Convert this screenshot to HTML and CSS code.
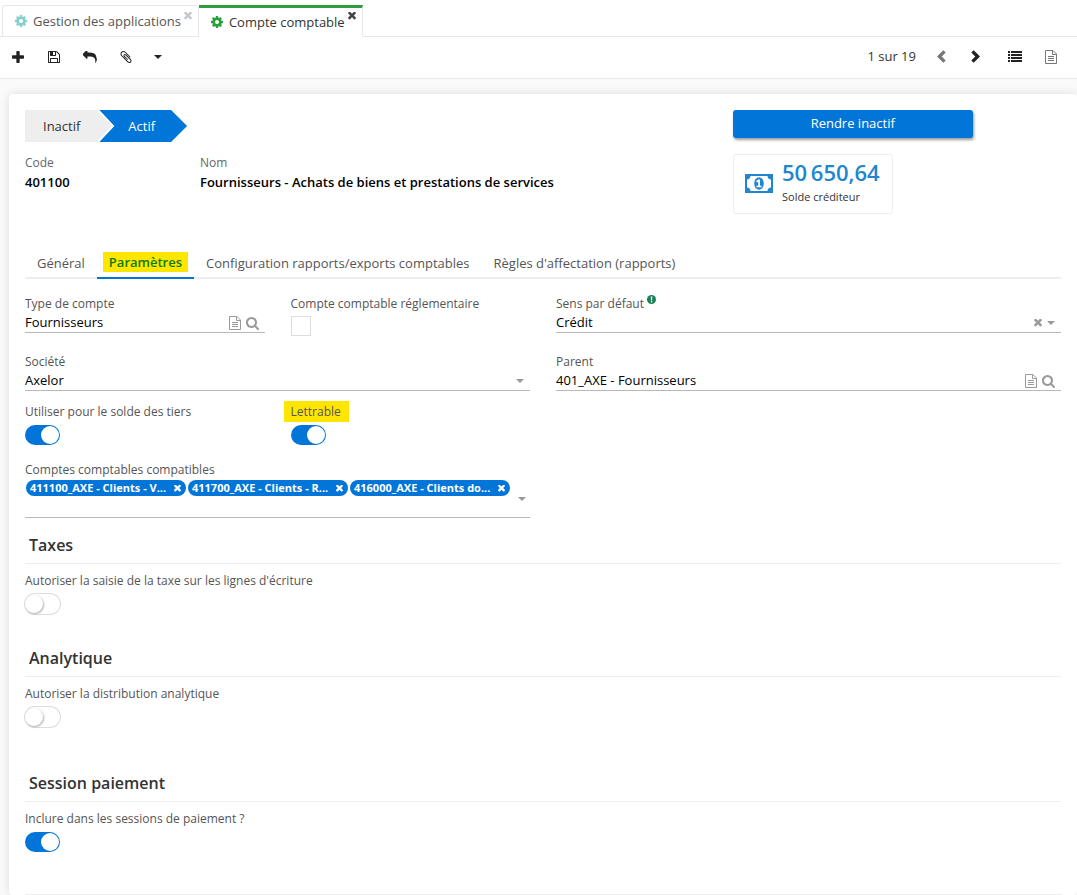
FILE: index.html
```html
<!DOCTYPE html>
<html lang="fr">
<head>
<meta charset="utf-8">
<title>Compte comptable</title>
<link rel="stylesheet" href="styles.css">
</head>
<body>
<svg class="sprite" aria-hidden="true">
  <symbol id="cog" viewBox="128 128 1536 1536"><path d="M1152 896q0-106-75-181t-181-75-181 75-75 181 75 181 181 75 181-75 75-181zm512-109v222q0 12-8 23t-20 13l-185 28q-19 54-39 91 35 50 107 138 10 12 10 25t-9 23q-27 37-99 108t-94 71q-12 0-26-9l-138-108q-44 23-91 38-16 136-29 186-7 28-36 28h-222q-14 0-24.500-8.500t-11.500-21.500l-28-184q-49-16-90-37l-141 107q-10 9-25 9-14 0-25-11-126-114-165-168-7-10-7-23 0-12 8-23 15-21 51-66.500t54-70.500q-27-50-41-99l-183-27q-13-2-21-12.500t-8-23.500v-222q0-12 8-23t19-13l186-28q14-46 39-92-40-57-107-138-10-12-10-24 0-10 9-23 26-36 98.500-107.500t94.500-71.500q13 0 26 10l138 107q44-23 91-38 16-136 29-186 7-28 36-28h222q14 0 24.500 8.500t11.500 21.500l28 184q49 16 90 37l142-107q9-9 24-9 13 0 25 10 129 119 165 170 7 8 7 22 0 12-8 23-15 21-51 66.500t-54 70.500q26 50 41 98l183 28q13 2 21 12.500t8 23.500z"/></symbol>
  <symbol id="times" viewBox="302 366 1188 1188"><path transform="translate(0 -68)" d="M1490 1322q0 40-28 68l-136 136q-28 28-68 28t-68-28l-294-294-294 294q-28 28-68 28t-68-28l-136-136q-28-28-28-68t28-68l294-294-294-294q-28-28-28-68t28-68l136-136q28-28 68-28t68 28l294 294 294-294q28-28 68-28t68 28l136 136q28 28 28 68t-28 68l-294 294 294 294q28 28 28 68z"/></symbol>
  <symbol id="plus" viewBox="192 128 1408 1408"><path d="M1600 736v192q0 40-28 68t-68 28h-416v416q0 40-28 68t-68 28h-192q-40 0-68-28t-28-68v-416h-416q-40 0-68-28t-28-68v-192q0-40 28-68t68-28h416v-416q0-40 28-68t68-28h192q40 0 68 28t28 68v416h416q40 0 68 28t28 68z"/></symbol>
  <symbol id="save" viewBox="128 128 1536 1536"><path d="M512 1536h768v-384h-768v384zm896 0h128v-896q0-14-10-38.500t-20-34.500l-281-281q-10-10-34-20t-39-10v416q0 40-28 68t-68 28h-576q-40 0-68-28t-28-68v-416h-128v1280h128v-416q0-40 28-68t68-28h832q40 0 68 28t28 68v416zm-384-928v-320q0-13-9.500-22.500t-22.500-9.500h-192q-13 0-22.500 9.500t-9.500 22.500v320q0 13 9.500 22.500t22.500 9.500h192q13 0 22.500-9.500t9.500-22.500zm640 32v928q0 40-28 68t-68 28h-1344q-40 0-68-28t-28-68v-1344q0-40 28-68t68-28h928q40 0 88 20t76 48l280 280q28 28 48 76t20 88z"/></symbol>
  <symbol id="reply" viewBox="0 128 1792 1536"><path d="M1792 1120q0 166-127 451-3 7-10.500 24t-13.500 30-13 22q-12 17-28 17-15 0-23.500-10t-8.500-25q0-9 2.500-26.500t2.500-23.500q5-68 5-123 0-112-19.500-200.500t-54-153.500-89.500-112-115.500-78-146.500-49-167.500-24-193.500-7h-224v256q0 26-19 45t-45 19-45-19l-512-512q-19-19-19-45t19-45l512-512q19-19 45-19t45 19 19 45v256h224q713 0 875 403 53 134 53 333z"/></symbol>
  <symbol id="clip" viewBox="196 132 1400 1528"><path d="M1596 1385q0 117-79 196t-196 79q-135 0-235-100l-777-776q-113-115-113-271 0-159 110-270t269-111q158 0 273 113l605 606q10 10 10 22 0 16-30.500 46.500t-46.500 30.500q-13 0-23-10l-606-607q-79-77-181-77-106 0-179 75t-73 181q0 105 76 181l776 777q63 63 145 63 64 0 106-42t42-106q0-82-63-145l-581-581q-26-24-60-24-29 0-48 19t-19 48q0 32 25 59l410 410q10 10 10 22 0 16-31 47t-47 31q-12 0-22-10l-410-410q-63-61-63-149 0-82 57-139t139-57q88 0 149 63l581 581q100 98 100 235z"/></symbol>
  <symbol id="caret" viewBox="0 0 8 4"><path d="M0 0h8L4 4z"/></symbol>
  <symbol id="prev" viewBox="0 0 9 13"><path d="M6.300.3 8.700 2.600 4.700 6.500l4 3.900-2.400 2.300L0 6.500z"/></symbol>
  <symbol id="next" viewBox="0 0 9 13"><path d="M2.700.3.3 2.600l4 3.900-4 3.900 2.400 2.300L9 6.500z"/></symbol>
  <symbol id="list" viewBox="0 0 14 11"><path d="M0 0h2v2H0zM3 0h11v2H3zM0 3h2v2H0zM3 3h11v2H3zM0 6h2v2H0zM3 6h11v2H3zM0 9h2v2H0zM3 9h11v2H3z"/></symbol>
  <symbol id="file" viewBox="0 0 12 14"><path fill="none" stroke="currentColor" d="M.5.5h7.500l3.500 3.500v9.500H.5zM7.500.5v4h4M3 6.500h6M3 8.500h6M3 10.500h6"/></symbol>
  <symbol id="search" viewBox="64 128 1664 1664"><path d="M1216 832q0-185-131.500-316.500t-316.500-131.500-316.500 131.500-131.500 316.500 131.500 316.500 316.500 131.500 316.500-131.500 131.500-316.500zm512 832q0 52-38 90t-90 38q-54 0-90-38l-343-342q-179 124-399 124-143 0-273.500-55.500t-225-150-150-225-55.500-273.500 55.500-273.500 150-225 225-150 273.500-55.500 273.500 55.500 225 150 150 225 55.500 273.500q0 220-124 399l343 343q37 37 37 90z"/></symbol>
  <symbol id="money" viewBox="0 0 28 19"><path fill-rule="evenodd" d="M0 0h28v19H0zM5.500 2A4 4 0 0 1 2 5.500v8A4 4 0 0 1 5.500 17h17a4 4 0 0 1 3.500-3.500v-8A4 4 0 0 1 22.500 2z"/><ellipse cx="14" cy="9.500" rx="4.800" ry="6.200"/><path fill="#fff" d="M13.200 5.500h1.800v6.300h1.500v1.500h-5v-1.500h1.700V7.600l-1.300.8-.8-1.200z"/></symbol>
  <symbol id="info" viewBox="0 0 9 9"><circle cx="4.500" cy="4.500" r="4.500"/><path fill="#fff" d="M3.800 1.500h1.500L5.100 5.400H4zM3.900 6.100h1.300v1.300H3.900z"/></symbol>
</svg>

<nav class="apptabs" aria-label="Onglets ouverts">
  <div class="apptab">
    <svg class="i12"><use href="#cog"/></svg>
    <a href="#applications">Gestion des applications</a>
    <button class="close" aria-label="Fermer Gestion des applications"><svg class="i8"><use href="#times"/></svg></button>
  </div>
  <div class="apptab current">
    <svg class="i12"><use href="#cog"/></svg>
    <a href="#compte" aria-current="page">Compte comptable</a>
    <button class="close" aria-label="Fermer Compte comptable"><svg class="i8"><use href="#times"/></svg></button>
  </div>
</nav>

<header class="toolbar">
  <button class="tool" aria-label="Nouveau"><svg class="i12"><use href="#plus"/></svg></button>
  <button class="tool" aria-label="Enregistrer"><svg class="i12"><use href="#save"/></svg></button>
  <button class="tool" aria-label="Annuler"><svg class="wide"><use href="#reply"/></svg></button>
  <button class="tool" aria-label="Pièces jointes"><svg class="i12"><use href="#clip"/></svg></button>
  <button class="tool narrow" aria-label="Plus d'actions"><svg class="caret"><use href="#caret"/></svg></button>
  <span class="pager">1 sur 19</span>
  <button class="tool step-nav muted" aria-label="Précédent"><svg class="chev"><use href="#prev"/></svg></button>
  <button class="tool step-nav" aria-label="Suivant"><svg class="chev"><use href="#next"/></svg></button>
  <button class="tool apart" aria-label="Vue liste"><svg class="list"><use href="#list"/></svg></button>
  <button class="tool muted" aria-label="Vue formulaire"><svg class="file"><use href="#file"/></svg></button>
</header>

<main class="page">
  <form class="card">
    <div class="head">
      <div class="identity">
        <div class="steps">
          <button type="button" class="step">Inactif</button>
          <button type="button" class="step active">Actif</button>
        </div>
        <dl class="facts">
          <div><dt>Code</dt><dd>401100</dd></div>
          <div><dt>Nom</dt><dd>Fournisseurs - Achats de biens et prestations de services</dd></div>
        </dl>
      </div>
      <div class="side">
        <button type="button" class="primary">Rendre inactif</button>
        <div class="stat">
          <svg class="money"><use href="#money"/></svg>
          <div>
            <div class="amount">50&#8201;650,64</div>
            <div class="caption">Solde créditeur</div>
          </div>
        </div>
      </div>
    </div>

    <nav class="tabs" aria-label="Sections">
      <a href="#general">Général</a>
      <a href="#parametres" class="selected" aria-current="true"><mark>Paramètres</mark></a>
      <a href="#configuration">Configuration rapports/exports comptables</a>
      <a href="#regles">Règles d'affectation (rapports)</a>
    </nav>

    <div class="row">
      <div class="field">
        <label for="type">Type de compte</label>
        <div class="control"><input id="type" type="text" value="Fournisseurs"><button type="button" aria-label="Ouvrir le type"><svg class="file"><use href="#file"/></svg></button><button type="button" aria-label="Rechercher un type"><svg class="i13"><use href="#search"/></svg></button></div>
      </div>
      <div class="field">
        <label for="regl">Compte comptable réglementaire</label>
        <input id="regl" class="check" type="checkbox">
      </div>
      <div class="field span2">
        <label for="sens">Sens par défaut <svg class="info"><use href="#info"/></svg></label>
        <div class="control"><select id="sens"><option>Crédit</option></select><button type="button" aria-label="Effacer le sens"><svg class="i8"><use href="#times"/></svg></button><svg class="caret"><use href="#caret"/></svg></div>
      </div>
    </div>

    <div class="row">
      <div class="field span2">
        <label for="societe">Société</label>
        <div class="control"><select id="societe"><option>Axelor</option></select><svg class="caret"><use href="#caret"/></svg></div>
      </div>
      <div class="field span2">
        <label for="parent">Parent</label>
        <div class="control"><input id="parent" type="text" value="401_AXE - Fournisseurs"><button type="button" aria-label="Ouvrir le parent"><svg class="file"><use href="#file"/></svg></button><button type="button" aria-label="Rechercher un parent"><svg class="i13"><use href="#search"/></svg></button></div>
      </div>
    </div>

    <div class="row switches">
      <div class="field">
        <label for="solde">Utiliser pour le solde des tiers</label>
        <input id="solde" class="switch" type="checkbox" checked>
      </div>
      <div class="field">
        <label for="lettrable"><mark>Lettrable</mark></label>
        <input id="lettrable" class="switch" type="checkbox" checked>
      </div>
    </div>

    <div class="row chiprow">
      <div class="field span2">
        <label for="compat">Comptes comptables compatibles</label>
        <div class="chips">
          <span class="chip">411100_AXE - Clients - V... <button type="button" aria-label="Retirer 411100"><svg class="i7"><use href="#times"/></svg></button></span>
          <span class="chip">411700_AXE - Clients - R... <button type="button" aria-label="Retirer 411700"><svg class="i7"><use href="#times"/></svg></button></span>
          <span class="chip">416000_AXE - Clients do... <button type="button" aria-label="Retirer 416000"><svg class="i7"><use href="#times"/></svg></button></span>
          <input id="compat" type="text">
          <svg class="caret"><use href="#caret"/></svg>
        </div>
      </div>
    </div>

    <section class="group">
      <h2>Taxes</h2>
      <label for="taxe">Autoriser la saisie de la taxe sur les lignes d'écriture</label>
      <input id="taxe" class="switch" type="checkbox">
    </section>
    <section class="group roomy">
      <h2>Analytique</h2>
      <label for="analytique">Autoriser la distribution analytique</label>
      <input id="analytique" class="switch" type="checkbox">
    </section>
    <section class="group last">
      <h2>Session paiement</h2>
      <label for="session">Inclure dans les sessions de paiement ?</label>
      <input id="session" class="switch" type="checkbox" checked>
    </section>
  </form>
</main>
</body>
</html>
```
FILE: styles.css
```css
* { box-sizing: border-box; }
body {
  margin: 0;
  font-family: "Open Sans", sans-serif;
  font-size: 13px;
  line-height: 20px;
  color: #333;
  background: #fafafa;
}
button, input, select { font: inherit; color: inherit; margin: 0; padding: 0; border: 0; background: none; }
button { display: inline-flex; align-items: center; justify-content: center; cursor: pointer; }
a { color: inherit; text-decoration: none; }
svg { display: block; flex: none; fill: currentColor; }
.sprite { position: absolute; width: 0; height: 0; }
.i13 { width: 13px; height: 13px; }
.i12 { width: 12px; height: 12px; }
.i8 { width: 8px; height: 8px; }
.i7 { width: 7px; height: 7px; }
.wide { width: 14px; height: 12px; }
.caret { width: 8px; height: 4px; }
.chev { width: 9px; height: 13px; }
.list { width: 14px; height: 11px; }
.file { width: 12px; height: 14px; }

/* open views */
.apptabs {
  display: flex;
  align-items: flex-end;
  height: 37px;
  padding-left: 2px;
  background: #fff;
  box-shadow: inset 0 -1px #e7e7e7;
}
.apptab {
  display: flex;
  align-items: center;
  height: 32px;
  padding: 0 6px 0 12px;
  border: 1px solid #e7e7e7;
  border-radius: 3px 3px 0 0;
  color: #555;
}
.apptab a { margin: 0 3px 0 6px; }
.apptab .i12 { color: #84d0cc; }
.apptab .close { align-self: flex-start; margin-top: 6px; color: #c8c8c8; }
.apptab.current { border-top: 3px solid #2e9e41; border-bottom-color: #fff; border-left: 0; border-radius: 0; color: #333; background: #fff; }
.apptab.current .i12 { color: #28a03c; }
.apptab.current .close { margin-top: 4px; color: #444; }

.toolbar {
  display: flex;
  align-items: center;
  height: 42px;
  padding: 0 8px 2px 0;
  background: #fff;
  border-bottom: 1px solid #e7e7e7;
}
.tool { width: 36px; height: 32px; color: #222; }
.tool.narrow { width: 28px; }
.tool.step-nav { width: 34px; }
.tool.muted { color: #777; }
.tool.apart { margin-left: 5px; }
.pager { margin-left: auto; padding: 0 8px 2px 0; }

/* form card */
.page { padding: 15px 0 0 9px; }
.card {
  padding: 16px 16px 0;
  background: #fff;
  border-radius: 4px;
  box-shadow: 0 0 10px rgba(0, 0, 0, .12);
}
.head { display: grid; grid-template-columns: repeat(12, minmax(0, 1fr)); column-gap: 26px; }
.identity { grid-column: span 8; }
.side { grid-column: span 3; }
.steps { display: flex; }
.step {
  height: 32px;
  padding: 0 32px 0 18px;
  background: #eee;
  clip-path: polygon(0 0, calc(100% - 16px) 0, 100% 50%, calc(100% - 16px) 100%, 0 100%);
}
.step.active {
  margin-left: -13px;
  padding-left: 29px;
  color: #fff;
  background: #0275d8;
  clip-path: polygon(0 0, calc(100% - 16px) 0, 100% 50%, calc(100% - 16px) 100%, 0 100%, 15px 50%);
}
.facts { display: grid; grid-template-columns: 149px 1fr; column-gap: 26px; margin: 11px 0 0; }
.facts dt { font-size: 12px; color: #666; }
.facts dd { margin: 0; line-height: 18px; font-weight: 600; color: #000; }
.primary {
  width: 100%;
  height: 28px;
  padding-bottom: 2px;
  border-radius: 3px;
  color: #fff;
  background: #0275d8;
  box-shadow: 1px 2px 3px rgba(0, 0, 0, .4);
}
.stat {
  display: inline-flex;
  align-items: center;
  gap: 9px;
  height: 60px;
  margin-top: 16px;
  padding: 0 12px 2px 11px;
  border: 1px solid #eee;
  border-radius: 3px;
}
.money { width: 28px; height: 19px; color: #2185d0; }
.amount { font-size: 22px; line-height: 28px; font-weight: 600; color: #2185d0; }
.caption { font-size: 11px; line-height: 22px; }

.tabs { display: flex; height: 32px; margin: 33px 0 15px; border-bottom: 2px solid #eee; line-height: 32px; color: #555; }
.tabs a { padding: 0 12px; height: 32px; }
.tabs .selected { padding: 0 6px; border-bottom: 2px solid #0275d8; color: #0b7a0b; font-weight: 600; line-height: 30px; }
mark { padding: 1px 6px; color: inherit; background: #ffe600; }

/* fields */
.row { display: grid; grid-template-columns: repeat(4, minmax(0, 1fr)); column-gap: 26px; height: 58px; }
.span2 { grid-column: span 2; }
label { display: block; font-size: 12px; color: #555; }
.control {
  display: flex;
  align-items: center;
  gap: 5px;
  height: 19px;
  padding-right: 6px;
  border-bottom: 1px solid #b8b8b8;
  color: #999;
}
.control input, .control select { flex: 1; min-width: 0; height: 18px; padding-bottom: 2px; line-height: 16px; color: #000; outline: 0; appearance: none; }
.check { display: block; width: 20px; height: 20px; margin-top: 2px; border: 1px solid #ddd; appearance: none; }
.info { display: inline-block; width: 9px; height: 9px; vertical-align: 4px; color: #1b8057; }
.switches { margin-top: -8px; }
.switches mark { margin-left: -7px; padding: 2px 8px 2px 7px; }
.switch {
  display: block;
  width: 35px;
  height: 20px;
  margin-top: 3px;
  border-radius: 10px;
  appearance: none;
  background: #fff;
  box-shadow: 0 0 0 1px #ddd;
}
.switch::before {
  content: "";
  display: block;
  width: 18px;
  height: 18px;
  margin: 1px 0 0;
  border-radius: 50%;
  background: #fff;
  box-shadow: 1px 1px 2px rgba(0, 0, 0, .3);
}
.switch:checked { background: #0275d8; box-shadow: none; padding-top: 1px; }
.switch:checked::before { margin: 0 0 0 16px; box-shadow: none; }
.chiprow { height: auto; }
.chips {
  display: flex;
  align-items: flex-start;
  gap: 2px;
  height: 38px;
  padding: 0 4px 0 1px;
  border-bottom: 1px solid #b8b8b8;
  color: #999;
}
.chips input { flex: 1; min-width: 0; height: 20px; outline: 0; }
.chips .caret { align-self: center; }
.chip {
  display: flex;
  flex: none;
  align-items: center;
  justify-content: space-between;
  width: 160px;
  height: 16px;
  padding: 0 5px 0 4px;
  border-radius: 8px;
  font-size: 11px;
  line-height: 16px;
  font-weight: 700;
  white-space: nowrap;
  color: #fff;
  background: #0275d8;
}

.group { padding: 10px 0 17px; }
.group h2 {
  margin: 0 0 7px;
  padding-left: 4px;
  border-bottom: 1px solid #eee;
  font-size: 16px;
  line-height: 35px;
  font-weight: 600;
}
.group.roomy { padding-bottom: 29px; }
.group.last { padding-bottom: 42px; border-bottom: 1px solid #eee; }
```
